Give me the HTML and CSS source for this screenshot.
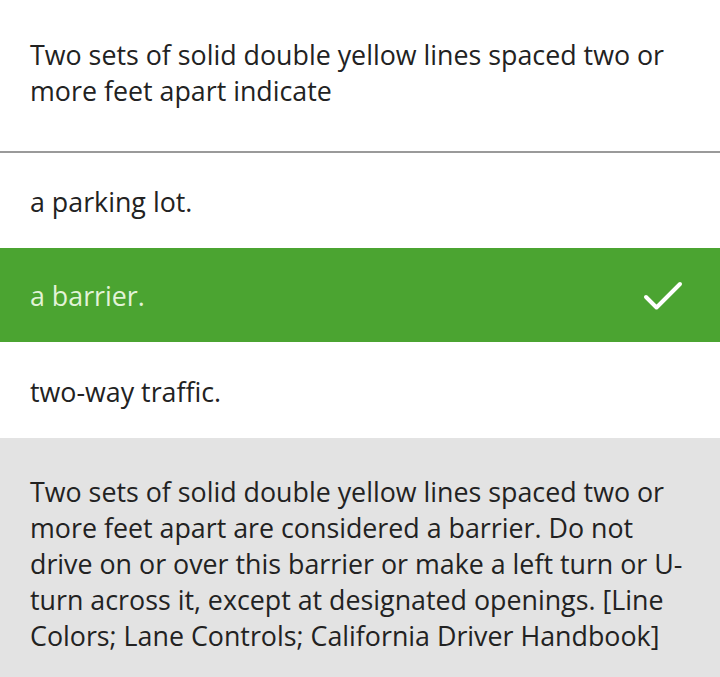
FILE: index.html
```html
<!DOCTYPE html>
<html>
<head>
<meta charset="utf-8">
<link rel="stylesheet" href="styles.css">
</head>
<body>
<div class="quiz">
  <div class="question">Two sets of solid double yellow lines spaced two or more feet apart indicate</div>
  <div class="options">
    <div class="option first">a parking lot.</div>
    <div class="option correct">
      <span>a barrier.</span>
      <svg class="check" width="42" height="34" viewBox="0 0 42 34"><path d="M4 18 L14.5 28.5 L38 5" fill="none" stroke="#ffffff" stroke-width="4" stroke-linecap="round" stroke-linejoin="round"/></svg>
    </div>
    <div class="option last">two-way traffic.</div>
  </div>
  <div class="explanation">Two sets of solid double yellow lines spaced two or more feet apart are considered a barrier. Do not drive on or over this barrier or make a left turn or U-turn across it, except at designated openings. [Line Colors; Lane Controls; California Driver Handbook]</div>
</div>
</body>
</html>
```

FILE: styles.css
```css
* { box-sizing: border-box; }
html, body { margin: 0; padding: 0; background: #ffffff; }
body {
  font-family: "Open Sans", "Noto Sans", sans-serif;
  font-size: 26.8px;
  line-height: 36px;
  color: #222222;
  width: 720px;
  height: 677px;
  overflow: hidden;
}
.quiz { display: flex; flex-direction: column; }
.question {
  padding: 37px 30px 42px 30px;
  border-bottom: 2px solid #9a9a9a;
}
.options { display: flex; flex-direction: column; }
.option {
  height: 94px;
  display: flex;
  align-items: center;
  justify-content: space-between;
  padding: 3px 36px 0 30px;
}
.option.first { height: 95px; }
.option.last { height: 96px; }
.option.correct {
  background: #4ba431;
  color: #e2f3d8;
  padding-top: 1px;
}
.check { display: block; }
.explanation {
  background: #e3e3e3;
  padding: 36px 30px 40px 30px;
  flex: 1;
  min-height: 240px;
}
```
